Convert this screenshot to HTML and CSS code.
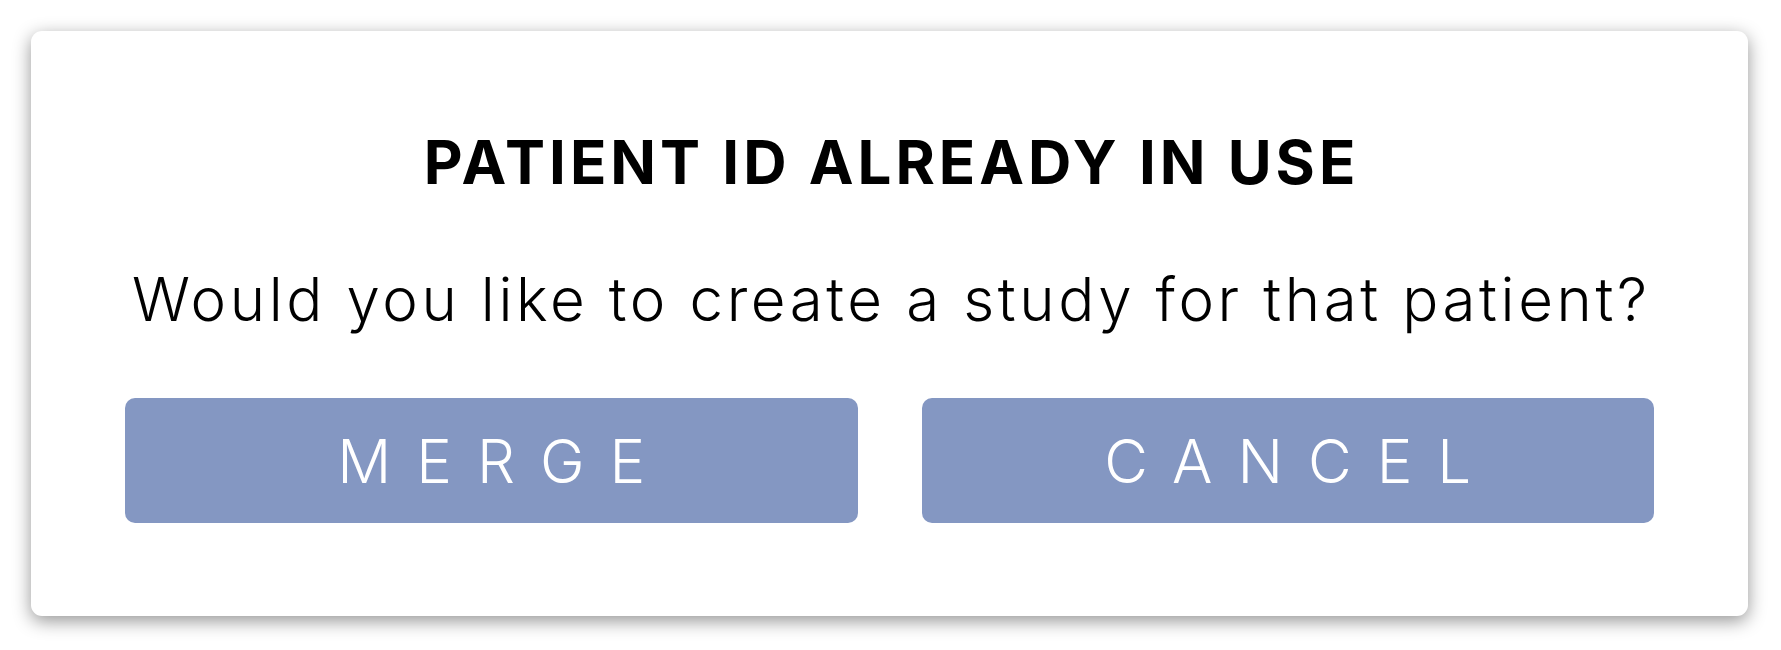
FILE: index.html
```html
<!DOCTYPE html>
<html lang="en">
<head>
<meta charset="utf-8">
<title>Patient ID already in use</title>
<link rel="stylesheet" href="styles.css">
</head>
<body>
  <div class="dialog" role="dialog" aria-labelledby="dlg-title">
    <h1 class="dialog-title" id="dlg-title">PATIENT ID ALREADY IN USE</h1>
    <p class="dialog-text">Would you like to create a study for that patient?</p>
    <div class="dialog-actions">
      <button class="btn" type="button">MERGE</button>
      <button class="btn" type="button">CANCEL</button>
    </div>
  </div>
</body>
</html>
```

FILE: styles.css
```css
html, body {
  margin: 0;
  background: #ffffff;
}

body {
  padding: 31px 33px 34px 31px;
  font-family: Inter, "Noto Sans", "Liberation Sans", sans-serif;
  color: #000;
}

.dialog {
  width: 1717px;
  height: 585px;
  box-sizing: border-box;
  background: #fff;
  border-radius: 11px;
  box-shadow: 0 5px 18px rgba(0, 0, 0, 0.42);
  padding: 101px 94px 0 94px;
  display: flex;
  flex-direction: column;
  align-items: center;
}

.dialog-title {
  margin: 0;
  font-size: 60px;
  line-height: 60px;
  font-weight: 700;
  letter-spacing: 4px;
  text-indent: 4px;
}

.dialog-text {
  margin: 77px 0 0 0;
  font-size: 60px;
  line-height: 60px;
  font-weight: 320;
  letter-spacing: 3.6px;
  text-indent: 3.6px;
}

.dialog-actions {
  margin-top: 69px;
  align-self: stretch;
  display: flex;
  gap: 64px;
}

.btn {
  flex: 1;
  height: 125px;
  border: none;
  border-radius: 10px;
  background: #8497c2;
  color: #fff;
  font-family: inherit;
  font-size: 60px;
  font-weight: 300;
  letter-spacing: 25px;
  text-indent: 25px;
  padding: 0;
  cursor: pointer;
}
```
